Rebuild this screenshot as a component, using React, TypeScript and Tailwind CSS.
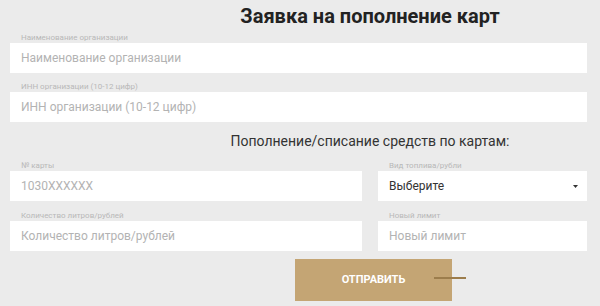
import React from "react";

function Field({ label, placeholder, className }: { label: string; placeholder: string; className?: string }) {
  return (
    <div className={className}>
      <div className="h-[10px] pl-[11px] text-[8px] leading-[10px] text-[#b8b8b8]">{label}</div>
      <input
        className="h-[30px] w-full bg-white pl-[11px] text-[12px] text-[#333] outline-none placeholder:text-[#b3b3b3]"
        placeholder={placeholder}
      />
    </div>
  );
}

export default function App() {
  return (
    <div className="h-[306px] w-[600px] bg-[#ebebeb] px-[10px] pt-[4px] font-['Roboto',sans-serif] overflow-hidden">
      <h1 className="ml-[140px] text-center text-[20px] font-bold leading-[24px] text-[#222]">
        Заявка на пополнение карт
      </h1>

      <Field className="mt-[5px] w-[577px]" label="Наименование организации" placeholder="Наименование организации" />
      <Field className="mt-[9px] w-[577px]" label="ИНН организации (10-12 цифр)" placeholder="ИНН организации (10-12 цифр)" />

      <h2 className="ml-[140px] mt-[9px] text-center text-[14px] leading-[20px] text-[#333]">
        Пополнение/списание средств по картам:
      </h2>

      <div className="mt-[10px] flex gap-[16px]">
        <Field className="w-[352px]" label="№ карты" placeholder="1030XXXXXX" />
        <div className="w-[209px]">
          <div className="h-[10px] pl-[11px] text-[8px] leading-[10px] text-[#b8b8b8]">Вид топлива/рубли</div>
          <div className="flex h-[30px] items-center justify-between bg-white pl-[11px] pr-[9px] text-[12px] text-[#333]">
            <span>Выберите</span>
            <svg width="5" height="3" viewBox="0 0 5 3">
              <path d="M0 0h5L2.5 3z" fill="#333" />
            </svg>
          </div>
        </div>
      </div>

      <div className="mt-[10px] flex gap-[16px]">
        <Field className="w-[352px]" label="Количество литров/рублей" placeholder="Количество литров/рублей" />
        <Field className="w-[209px]" label="Новый лимит" placeholder="Новый лимит" />
      </div>

      <div className="mt-[8px] pl-[285px]">
        <button className="relative h-[42px] w-[157px] bg-[#c4a574] text-[11px] font-bold text-white">
          ОТПРАВИТЬ
          <span className="absolute left-[139px] top-[18px] h-[2px] w-[32px] bg-[#9c7d4c]" />
        </button>
      </div>
    </div>
  );
}
